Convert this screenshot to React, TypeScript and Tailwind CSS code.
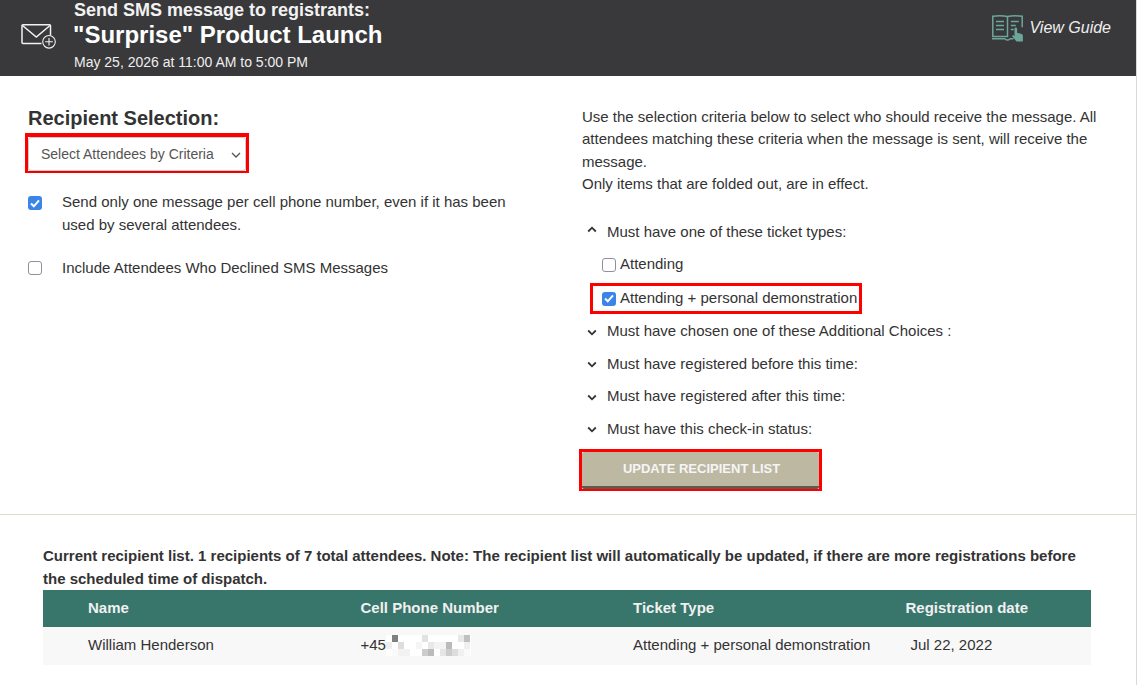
const blur: [number, number, string][] = [
  [1, 0, "#808080"], [6, 0, "#e2e2e2"], [12, 0, "#e8e8e8"], [13, 0, "#c0c0c0"],
  [0, 1, "#eeeeee"], [2, 1, "#dddddd"], [5, 1, "#f5f5f5"], [7, 1, "#e8e8e8"], [8, 1, "#f3f3f3"], [9, 1, "#f3f3f3"], [10, 1, "#bbbbbb"], [13, 1, "#f0f0f0"],
  [1, 2, "#fafafa"], [2, 2, "#f2f2f2"], [3, 2, "#f2f2f2"], [6, 2, "#cccccc"], [7, 2, "#bbbbbb"], [9, 2, "#e5e5e5"], [10, 2, "#cccccc"], [11, 2, "#dddddd"], [12, 2, "#f0f0f0"], [13, 2, "#fafafa"],
];

function MailPlus() {
  return (
    <svg width="36" height="26" viewBox="0 0 36 26" fill="none" stroke="#f2f2f2" className="shrink-0">
      <path d="M20.500 19.500H2a1 1 0 0 1-1-1V1.800a1 1 0 0 1 1-1h26.500a1 1 0 0 1 1 1v9.500" strokeWidth="1.500" />
      <path d="M1.500 1.500l13.800 11.500L29 1.500" strokeWidth="1.500" />
      <circle cx="28" cy="17.800" r="6.300" strokeWidth="1.100" />
      <path d="M28 14v7.600M24.200 17.800h7.600" strokeWidth="1.100" />
    </svg>
  );
}

function BookHand() {
  return (
    <svg width="32" height="27" viewBox="0 0 32 27" fill="none" stroke="#6da69a" strokeWidth="1.500">
      <path d="M15.500 1.500C12 .8 5 .8.800 1.200v20.300h14.700V1.500zM15.500 1.500C19 .8 26 .8 30.200 1.200v11" />
      <path d="M0 23.700h12.500c1 0 1 1.300 3 1.300s2-1.300 3-1.300h3" />
      <path d="M4 6.500h8M4 10.500h8M4 14.500h8M18.800 6.500h8M18.800 10.500h5M18.800 14.500h3" />
      <path d="M22.500 13.800a1.300 1.300 0 0 1 2.600 0v4l3.800.9c1.300.3 2 1 2 2.200v5.600h-6.400l-4.500-5.500.9-1 1.600 1.100z" fill="#6da69a" stroke="none" />
    </svg>
  );
}

function Chevron({ up = false }: { up?: boolean }) {
  return (
    <svg width="10" height="7" viewBox="0 0 10 7" fill="none" stroke="#333" strokeWidth="1.800" className={up ? "shrink-0 -translate-y-[3px]" : "shrink-0 translate-y-[1px]"}>
      <path d={up ? "M1.200 5.500L5 1.700l3.800 3.800" : "M1.200 1.500L5 5.300l3.800-3.800"} />
    </svg>
  );
}

function Criteria({ label, up = false }: { label: string; up?: boolean }) {
  return (
    <div className="flex h-[32.5px] items-center gap-[10px] pl-[5px]">
      <Chevron up={up} />
      <span>{label}</span>
    </div>
  );
}

function CheckBox({ checked = false }: { checked?: boolean }) {
  return checked ? (
    <span className="flex size-[14px] shrink-0 items-center justify-center rounded-[3px] bg-[#3b84e8]">
      <svg width="10" height="9" viewBox="0 0 10 9" fill="none" stroke="#ffffff" strokeWidth="2">
        <path d="M1 4.500l2.800 2.800L9 1.300" />
      </svg>
    </span>
  ) : (
    <span className="block size-[14px] shrink-0 rounded-[3px] border border-[#8f8f9d] bg-white" />
  );
}

export default function App() {
  return (
    <div className="min-h-screen w-[1137px] overflow-hidden border-r border-[#d9d9d9] bg-white text-[15px] leading-[22.5px] text-[#333] font-['Liberation_Sans',Arial,sans-serif]">
      {/* Header */}
      <div className="flex h-[76px] items-start justify-between bg-[#39393b] pl-[21px] pr-[25px] text-white">
        <div className="flex items-start gap-[17px]">
          <div className="pt-[24px]">
            <MailPlus />
          </div>
          <div>
            <div className="text-[18px] font-bold leading-[20px] text-[#f2f2f2]">Send SMS message to registrants:</div>
            <div className="-ml-px text-[24px] font-bold leading-[30px]">"Surprise" Product Launch</div>
            <div className="mt-[2px] text-[14px] leading-[20px] text-[#eeeeee]">May 25, 2026 at 11:00 AM to 5:00 PM</div>
          </div>
        </div>
        <div className="flex items-center gap-[5px] pt-[15px]">
          <BookHand />
          <span className="text-[16px] italic text-[#eeeeee]">View Guide</span>
        </div>
      </div>

      {/* Selection */}
      <div className="flex h-[439px] border-b border-[#dcdccb]">
        <div className="w-[554px] pl-[28px] pt-[28px]">
          <h2 className="pt-px text-[20px] font-bold leading-[26px]">Recipient Selection:</h2>
          <div className="relative ml-[-3px] mt-[2px] w-fit border-x-[3px] border-b-2 border-t-4 border-[#ff0000]">
            <select className="block h-[34px] w-[218px] appearance-none rounded-[3px] border border-[#cccccc] bg-white pl-[12px] text-[14px] text-[#555] shadow-sm">
              <option>Select Attendees by Criteria</option>
            </select>
            <svg width="10" height="6" viewBox="0 0 10 6" fill="none" stroke="#555" strokeWidth="1.300" className="pointer-events-none absolute right-[5px] top-[15px]">
              <path d="M1 1l4 4 4-4" />
            </svg>
          </div>
          <div className="mt-[18px] flex w-[490px] gap-[20px]">
            <span className="pt-[5px]">
              <CheckBox checked />
            </span>
            <span>Send only one message per cell phone number, even if it has been used by several attendees.</span>
          </div>
          <div className="mt-[21px] flex gap-[20px]">
            <span className="pt-[4px]">
              <CheckBox />
            </span>
            <span>Include Attendees Who Declined SMS Messages</span>
          </div>
        </div>
        <div className="flex-1 pl-[28px] pt-[29.5px]">
          <p className="w-[525px]">
            Use the selection criteria below to select who should receive the message. All attendees matching these criteria when the message is sent, will receive the message.
            <br />
            Only items that are folded out, are in effect.
          </p>
          <div className="mt-[20.5px]">
            <Criteria up label="Must have one of these ticket types:" />
            <div className="flex h-[32px] items-center gap-[4px] pl-[20px]">
              <CheckBox />
              <span>Attending</span>
            </div>
            <div className="ml-[8px] mt-[2.5px] mb-[1px] flex h-[31px] w-fit items-center gap-[4px] border-[3px] border-[#ff0000] pl-[9px] pr-[2px]">
              <CheckBox checked />
              <span>Attending + personal demonstration</span>
            </div>
            <Criteria label="Must have chosen one of these Additional Choices :" />
            <Criteria label="Must have registered before this time:" />
            <Criteria label="Must have registered after this time:" />
            <Criteria label="Must have this check-in status:" />
          </div>
          <div className="ml-[-3px] mt-[4px] w-fit border-x-[3px] border-b-2 border-t-[3px] border-[#ff0000]">
            <button className="block h-[37px] w-[237px] rounded-[2px] border-b-[3px] border-[#5e5a4c] bg-[#bdb8a1] pl-[2px] text-[13px] font-bold text-[#f5f5f5]">
              UPDATE RECIPIENT LIST
            </button>
          </div>
        </div>
      </div>

      {/* Recipients */}
      <div className="pl-[43px] pr-[45px] pt-[29px]">
        <p className="font-bold leading-[23px]">
          Current recipient list. 1 recipients of 7 total attendees. Note: The recipient list will automatically be updated, if there are more registrations before the scheduled time of dispatch.
        </p>
        <div className="flex h-[37px] items-center bg-[#38766c] pb-px pl-[45px] font-bold text-[#f0f0f0]">
          <div className="w-[272.500px]">Name</div>
          <div className="w-[272.500px]">Cell Phone Number</div>
          <div className="w-[272.500px]">Ticket Type</div>
          <div>Registration date</div>
        </div>
        <div className="flex h-[38px] items-center bg-[#f8f8f8] pb-px pl-[45px]">
          <div className="w-[272.500px]">William Henderson</div>
          <div className="flex w-[272.500px] items-center">
            <span>+45</span>
            <svg width="85" height="21" viewBox="0 0 85 21">
              <rect width="85" height="21" fill="#ffffff" />
              {blur.map(([c, r, f]) => (
                <rect key={`${c}-${r}`} x={c * 6} y={r * 7} width="6" height="7" fill={f} />
              ))}
            </svg>
          </div>
          <div className="w-[272.500px]">Attending + personal demonstration</div>
          <div className="pl-[5px]">Jul 22, 2022</div>
        </div>
      </div>
    </div>
  );
}
